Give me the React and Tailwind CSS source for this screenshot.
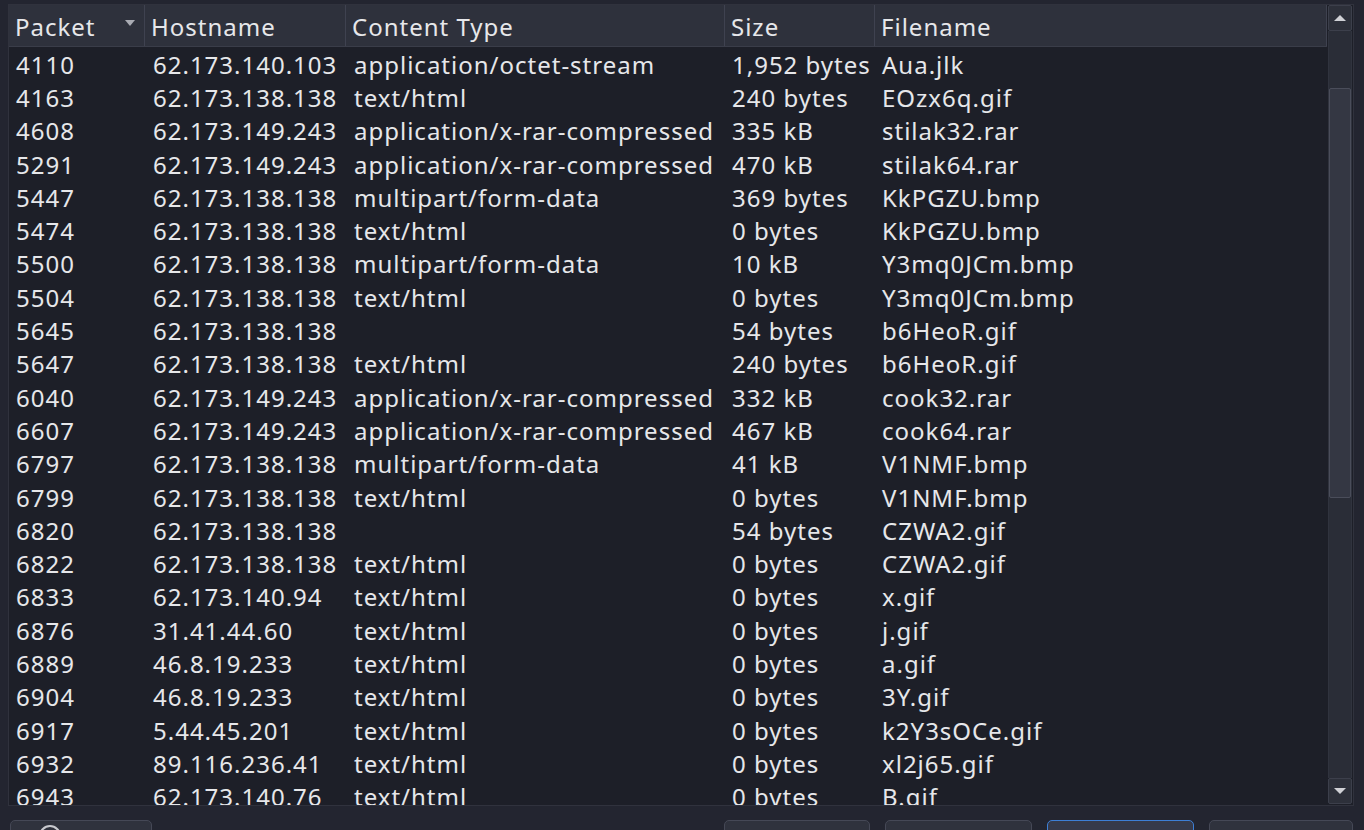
import React from "react";

const rows = [
  ["4110", "62.173.140.103", "application/octet-stream", "1,952 bytes", "Aua.jlk"],
  ["4163", "62.173.138.138", "text/html", "240 bytes", "EOzx6q.gif"],
  ["4608", "62.173.149.243", "application/x-rar-compressed", "335 kB", "stilak32.rar"],
  ["5291", "62.173.149.243", "application/x-rar-compressed", "470 kB", "stilak64.rar"],
  ["5447", "62.173.138.138", "multipart/form-data", "369 bytes", "KkPGZU.bmp"],
  ["5474", "62.173.138.138", "text/html", "0 bytes", "KkPGZU.bmp"],
  ["5500", "62.173.138.138", "multipart/form-data", "10 kB", "Y3mq0JCm.bmp"],
  ["5504", "62.173.138.138", "text/html", "0 bytes", "Y3mq0JCm.bmp"],
  ["5645", "62.173.138.138", "", "54 bytes", "b6HeoR.gif"],
  ["5647", "62.173.138.138", "text/html", "240 bytes", "b6HeoR.gif"],
  ["6040", "62.173.149.243", "application/x-rar-compressed", "332 kB", "cook32.rar"],
  ["6607", "62.173.149.243", "application/x-rar-compressed", "467 kB", "cook64.rar"],
  ["6797", "62.173.138.138", "multipart/form-data", "41 kB", "V1NMF.bmp"],
  ["6799", "62.173.138.138", "text/html", "0 bytes", "V1NMF.bmp"],
  ["6820", "62.173.138.138", "", "54 bytes", "CZWA2.gif"],
  ["6822", "62.173.138.138", "text/html", "0 bytes", "CZWA2.gif"],
  ["6833", "62.173.140.94", "text/html", "0 bytes", "x.gif"],
  ["6876", "31.41.44.60", "text/html", "0 bytes", "j.gif"],
  ["6889", "46.8.19.233", "text/html", "0 bytes", "a.gif"],
  ["6904", "46.8.19.233", "text/html", "0 bytes", "3Y.gif"],
  ["6917", "5.44.45.201", "text/html", "0 bytes", "k2Y3sOCe.gif"],
  ["6932", "89.116.236.41", "text/html", "0 bytes", "xl2j65.gif"],
  ["6943", "62.173.140.76", "text/html", "0 bytes", "B.gif"],
];

const columns = [
  { label: "Packet", width: "w-[136px] shrink-0" },
  { label: "Hostname", width: "w-[201px] shrink-0" },
  { label: "Content Type", width: "w-[379px] shrink-0" },
  { label: "Size", width: "w-[150px] shrink-0" },
  { label: "Filename", width: "flex-1" },
];

const App = () => {
  return (
    <div
      className="w-[1364px] h-[830px] overflow-hidden bg-[#232530] text-[#e6e7ea]"
      style={{ fontFamily: '"Noto Sans", "Open Sans", sans-serif' }}
    >
      <div className="pt-[4px] pl-[8px] pr-[10px]">
        <div className="flex h-[802px] border border-[#30323d] bg-[#1d1f28] overflow-hidden">
          {/* table */}
          <div className="flex-1 flex flex-col overflow-hidden">
            <div className="flex h-[42px] bg-[#2e313c] border-b border-[#3a3d49] shrink-0">
              {columns.map((col, i) => (
                <div
                  key={col.label}
                  className={`${col.width} flex items-center pl-[6px] pt-[3px] text-[24px] tracking-[1px] border-r border-[#3f4250] ${
                    i === 0 ? "justify-between pr-[8px]" : ""
                  }`}
                >
                  <span>{col.label}</span>
                  {i === 0 && (
                    <svg width="12" height="8" viewBox="0 0 12 8" className="mb-[8px]">
                      <path d="M1 1 L11 1 L6 7 Z" fill="#a9abb3" />
                    </svg>
                  )}
                </div>
              ))}
            </div>
            <div className="flex flex-col pt-[1px]">
              {rows.map((r) => (
                <div
                  key={r[0]}
                  className="flex h-[33.3px] items-center text-[24px] tracking-[1px] leading-none whitespace-nowrap shrink-0"
                >
                  <div className="w-[136px] shrink-0 pl-[7px]">{r[0]}</div>
                  <div className="w-[201px] shrink-0 pl-[8px]">{r[1]}</div>
                  <div className="w-[379px] shrink-0 pl-[8px]">{r[2]}</div>
                  <div className="w-[150px] shrink-0 pl-[7px]">{r[3]}</div>
                  <div className="flex-1 pl-[7px]">{r[4]}</div>
                </div>
              ))}
            </div>
          </div>
          {/* scrollbar */}
          <div className="w-[26px] flex flex-col px-[1px] bg-[#1d1f28]">
            <div className="h-[26px] flex items-center justify-center bg-[#2d303a] border border-[#3c3f4b] rounded-[2px]">
              <svg width="14" height="8" viewBox="0 0 14 8">
                <path d="M1 7 L13 7 L7 1 Z" fill="#d0d1d6" />
              </svg>
            </div>
            <div className="flex-1 flex flex-col bg-[#2a2d37] border-x border-[#30333e]">
              <div className="h-[57px]" />
              <div className="h-[410px] bg-[#343743] border border-[#4a4d5a] rounded-[2px]" />
            </div>
            <div className="h-[26px] flex items-center justify-center bg-[#2d303a] border border-[#3c3f4b] rounded-[2px] mb-[1px]">
              <svg width="14" height="8" viewBox="0 0 14 8">
                <path d="M1 1 L13 1 L7 7 Z" fill="#d0d1d6" />
              </svg>
            </div>
          </div>
        </div>
      </div>
      {/* bottom button row, mostly cut off */}
      <div className="flex pt-[14px] pl-[10px] pr-[11px]">
        <div className="w-[142px] h-[30px] rounded-[5px] bg-[#2f323d] border border-[#454856] flex justify-start pl-[28px] pt-[4px]">
          <div className="w-[22px] h-[22px] rounded-full border-2 border-[#c8c9ce]" />
        </div>
        <div className="flex-1" />
        <div className="flex gap-[15px]">
          <div className="w-[146px] h-[30px] rounded-[5px] bg-[#2f323d] border border-[#454856]" />
          <div className="w-[147px] h-[30px] rounded-[5px] bg-[#2f323d] border border-[#454856]" />
          <div className="w-[147px] h-[30px] rounded-[5px] bg-[#363a4a] border border-[#3d7fd6]" />
          <div className="w-[144px] h-[30px] rounded-[5px] bg-[#2f323d] border border-[#454856]" />
        </div>
      </div>
    </div>
  );
};

export default App;
